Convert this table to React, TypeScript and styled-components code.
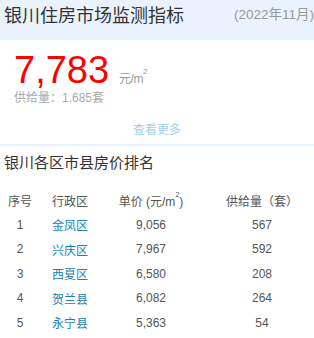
import styled, { createGlobalStyle } from 'styled-components'

const GlobalStyle = createGlobalStyle`
  html, body { margin:0; padding:0; background:#fff; }
  body { font-family: "Liberation Sans", "Noto Sans CJK SC", sans-serif; overflow:hidden; }
`

interface District { rank: number; name: string; price: string; supply: number }

const DISTRICTS: District[] = [
  { rank: 1, name: '金凤区', price: '9,056', supply: 567 },
  { rank: 2, name: '兴庆区', price: '7,967', supply: 592 },
  { rank: 3, name: '西夏区', price: '6,580', supply: 208 },
  { rank: 4, name: '贺兰县', price: '6,082', supply: 264 },
  { rank: 5, name: '永宁县', price: '5,363', supply: 54 },
]

export default function App() {
  return (
    <Page>
      <GlobalStyle />
      <HeaderBar>
        <Title>银川住房市场监测指标</Title>
        <DateLabel>(2022年11月)</DateLabel>
      </HeaderBar>

      <Summary>
        <PriceLine>
          <BigPrice>7,783</BigPrice>
          <Unit>元/m<sup>2</sup></Unit>
        </PriceLine>
        <Supply>供给量：1,685套</Supply>
      </Summary>

      <MoreLink>查看更多</MoreLink>
      <Divider />

      <SectionTitle>银川各区市县房价排名</SectionTitle>

      <Table>
        <HeadRow>
          <Cell>序号</Cell>
          <Cell>行政区</Cell>
          <Cell>单价 (元/m<sup>2</sup>)</Cell>
          <Cell>供给量（套）</Cell>
        </HeadRow>
        {DISTRICTS.map(d => (
          <Row key={d.rank}>
            <Cell>{d.rank}</Cell>
            <Cell $link>{d.name}</Cell>
            <Cell>{d.price}</Cell>
            <Cell>{d.supply}</Cell>
          </Row>
        ))}
      </Table>
    </Page>
  )
}

const Page = styled.div`
  width:314px;
  height:338px;
  overflow:hidden;
  display:flex;
  flex-direction:column;
`
const HeaderBar = styled.div`
  height:40px;
  background:#eaf3fd;
  display:flex;
  justify-content:space-between;
  align-items:flex-start;
  padding-left:4px;
  box-sizing:border-box;
  flex-shrink:0;
`
const Title = styled.h1`
  margin:0;
  font-size:18px;
  line-height:32px;
  font-weight:400;
  color:#333;
`
const DateLabel = styled.span`
  font-size:13.5px;
  line-height:30px;
  color:#999;
  white-space:nowrap;
`
const Summary = styled.div`
  display:flex;
  flex-direction:column;
  padding:11px 0 0 14px;
`
const PriceLine = styled.div`
  display:flex;
  align-items:baseline;
  gap:10px;
`
const BigPrice = styled.span`
  font-size:38px;
  line-height:38px;
  color:#ff0000;
`
const Unit = styled.span`
  font-size:12px;
  color:#999;
  letter-spacing:-0.5px;
  sup { font-size:8px; vertical-align:top; position:relative; top:-2px; }
`
const Supply = styled.div`
  margin-top:2px;
  font-size:12px;
  line-height:14px;
  color:#aaa;
`
const MoreLink = styled.a`
  margin-top:17px;
  align-self:center;
  font-size:12px;
  line-height:16px;
  color:#9fd0f2;
  cursor:pointer;
`
const Divider = styled.div`
  margin-top:6px;
  height:2px;
  background:#e6f2fd;
`
const SectionTitle = styled.h2`
  margin:7px 0 0 4px;
  font-size:15px;
  line-height:20px;
  font-weight:400;
  color:#333;
`
const Table = styled.div`
  margin-top:15px;
  display:flex;
  flex-direction:column;
`
const Row = styled.div`
  display:grid;
  grid-template-columns:40px 60px 102px 120px;
  height:24.5px;
  align-items:center;
`
const HeadRow = styled(Row)``
const Cell = styled.div<{ $link?: boolean }>`
  text-align:center;
  font-size:12px;
  color:${p => p.$link ? '#1a7fb5' : '#555'};
  white-space:nowrap;
  sup { font-size:7px; vertical-align:top; position:relative; top:-1px; }
`
